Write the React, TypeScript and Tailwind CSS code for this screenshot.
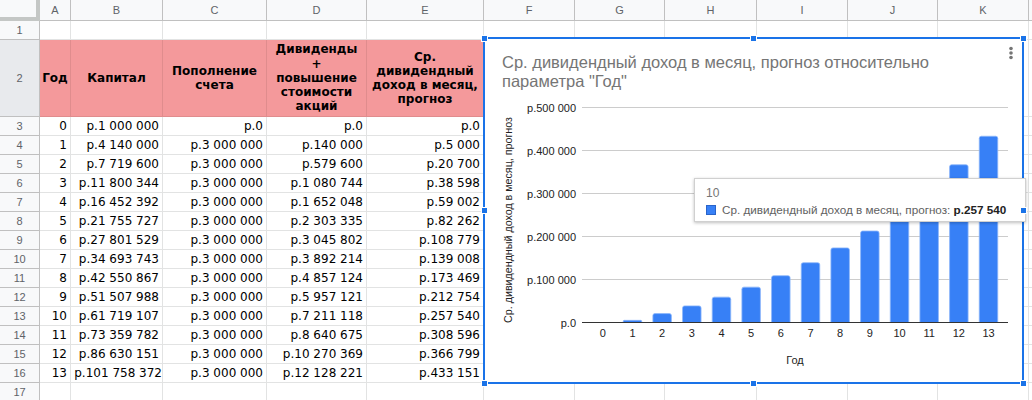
import React from "react";

const cols = ["A", "B", "C", "D", "E", "F", "G", "H", "I", "J", "K", ""];

const capital = [
  "1 000 000", "4 140 000", "7 719 600", "11 800 344", "16 452 392", "21 755 727", "27 801 529",
  "34 693 743", "42 550 867", "51 507 988", "61 719 107", "73 359 782", "86 630 151", "101 758 372",
];
const dividends = [
  "0", "140 000", "579 600", "1 080 744", "1 652 048", "2 303 335", "3 045 802",
  "3 892 214", "4 857 124", "5 957 121", "7 211 118", "8 640 675", "10 270 369", "12 128 221",
];
const monthly = [0, 5000, 20700, 38598, 59002, 82262, 108779, 139008, 173469, 212754, 257540, 308596, 366799, 433151];

const fmt = (n: number) => n.toString().replace(/\B(?=(\d{3})+(?!\d))/g, " ");

const headers: string[][] = [
  ["Год"],
  ["Капитал"],
  ["Пополнение", "счета"],
  ["Дивиденды", "+", "повышение", "стоимости", "акций"],
  ["Ср.", "дивидендный", "доход в месяц,", "прогноз"],
];

const rowH = [19, 77, ...Array(15).fill(19)];

function RowHeader({ n, tall }: { n: number; tall?: boolean }) {
  return (
    <div
      className={
        "flex items-center justify-center border-r border-b border-[#c0c0c0] text-[11px] text-[#5f6368] font-['Liberation_Sans',Arial,sans-serif] " +
        (tall ? "bg-[#e8eaed]" : "bg-[#f8f9fa]")
      }
    >
      {n}
    </div>
  );
}

function Cell({ children, tight }: { children?: React.ReactNode; tight?: boolean }) {
  return (
    <div
      className={
        "flex items-center justify-end whitespace-nowrap text-[12px] text-black border-r border-b border-[#e2e3e3] " +
        (tight ? "pr-0" : "pr-[3px]")
      }
    >
      {children}
    </div>
  );
}

function Chart() {
  const y0 = 322.5;
  const step = 43;
  const bx = (i: number) => 602.8 + 29.67 * i;
  const bw = 18.5;
  return (
    <div className="absolute left-[483px] top-[37px] w-[541px] h-[347px] border-2 border-[#1a73e8] bg-white">
      <svg
        className="absolute -left-[2px] -top-[2px]"
        width={541}
        height={347}
        viewBox="483 37 541 347"
        fontFamily="'Liberation Sans', Arial, sans-serif"
      >
        <text x={502} y={68} fontSize={16.5} fill="#757575">
          Ср. дивидендный доход в месяц, прогноз относительно
        </text>
        <text x={502} y={87} fontSize={16.5} fill="#757575">
          параметра "Год"
        </text>
        <circle cx={1011} cy={48.5} r={1.8} fill="#757575" />
        <circle cx={1011} cy={53} r={1.8} fill="#757575" />
        <circle cx={1011} cy={57.5} r={1.8} fill="#757575" />

        {[1, 2, 3, 4, 5].map((k) => (
          <line key={k} x1={582} x2={1008} y1={y0 - step * k} y2={y0 - step * k} stroke="#cccccc" />
        ))}
        {[0, 1, 2, 3, 4, 5].map((k) => (
          <text key={k} x={576} y={y0 - step * k + 4} fontSize={11} fill="#222" textAnchor="end">
            {k === 0 ? "р.0" : `р.${k}00 000`}
          </text>
        ))}
        {monthly.map((v, i) => {
          const h = (v / 100000) * step;
          if (h < 0.5) return null;
          const x = bx(i) - bw / 2;
          const t = y0 - h;
          const r = Math.min(2, h / 2);
          return (
            <path
              key={i}
              d={`M${x} ${y0} V${t + r} Q${x} ${t} ${x + r} ${t} H${x + bw - r} Q${x + bw} ${t} ${x + bw} ${t + r} V${y0} Z`}
              fill="#3780f6"
              stroke="#8db6fa"
              strokeWidth={0.8}
            />
          );
        })}
        <line x1={582} x2={1008} y1={y0} y2={y0} stroke="#333" />
        {monthly.map((_, i) => (
          <text key={i} x={bx(i)} y={337} fontSize={11} fill="#222" textAnchor="middle">
            {i}
          </text>
        ))}
        <text x={795} y={364} fontSize={11} fill="#222" textAnchor="middle">
          Год
        </text>
        <text
          x={0}
          y={0}
          fontSize={10.7}
          fill="#222"
          textAnchor="middle"
          transform="translate(512 220) rotate(-90)"
        >
          Ср. дивидендный доход в месяц, прогноз
        </text>
      </svg>

      <div className="absolute left-[209px] top-[139px] w-[332px] h-[44px] bg-white border border-[#d0d0d0] shadow-[0_1px_3px_rgba(0,0,0,0.25)] font-['Liberation_Sans',Arial,sans-serif] text-[11.7px] pl-[11px] pt-[6px]">
        <div className="text-[#757575] leading-[16px] text-[12px]">10</div>
        <div className="flex items-center gap-[6px] leading-[16px] mt-[1px]">
          <span className="inline-block w-[10px] h-[10px] bg-[#3780f6] border border-[#2a64c9]" />
          <span className="whitespace-nowrap text-[#616161]">
            Ср. дивидендный доход в месяц, прогноз: <b className="text-[#222]">р.257 540</b>
          </span>
        </div>
      </div>
    </div>
  );
}

function Handles() {
  const pts = [
    [484, 38], [753.5, 38], [1023, 38],
    [484, 210.5], [1023, 210.5],
    [484, 383], [753.5, 383], [1023, 383],
  ];
  return (
    <>
      {pts.map(([x, y], i) => (
        <div
          key={i}
          className="absolute w-[7px] h-[7px] bg-[#1a73e8] border border-white"
          style={{ left: x - 3.5, top: y - 3.5 }}
        />
      ))}
    </>
  );
}

export default function App() {
  return (
    <div className="relative w-[1032px] h-[400px] overflow-hidden bg-white font-['DejaVu_Sans',Verdana,sans-serif]">
      <div
        className="grid grid-cols-[40px_31px_92px_104px_100px_117px_91px_90px_92px_91px_90px_91px_60px]"
        style={{ gridTemplateRows: `21px ${rowH.map((h) => h + "px").join(" ")}` }}
      >
        {/* corner + column letters */}
        <div className="bg-[#f8f9fa] border-r-4 border-b-4 border-[#c4c7c5]" />
        {cols.map((c, i) => (
          <div
            key={i}
            className="flex items-center justify-center bg-[#f8f9fa] border-r border-b border-[#c0c0c0] text-[11px] text-[#5f6368] font-['Liberation_Sans',Arial,sans-serif]"
          >
            {c}
          </div>
        ))}

        {/* row 1 */}
        <RowHeader n={1} />
        {cols.map((_, i) => (
          <Cell key={i} />
        ))}

        {/* row 2 - header */}
        <RowHeader n={2} tall />
        {headers.map((lines, i) => (
          <div
            key={i}
            className="flex items-center justify-center text-center bg-[#f4999b] border-r border-b border-[#e08c8d] px-[2px] text-[12px] leading-[14.2px] font-bold text-black"
          >
            <div>
              {lines.map((l, j) => (
                <div key={j} className="whitespace-nowrap">
                  {l}
                </div>
              ))}
            </div>
          </div>
        ))}
        {cols.slice(5).map((_, i) => (
          <Cell key={i} />
        ))}

        {/* data */}
        {monthly.map((m, r) => (
          <React.Fragment key={r}>
            <RowHeader n={r + 3} />
            <Cell>{r}</Cell>
            <Cell tight={r === 13}>р.{capital[r]}</Cell>
            <Cell>{r === 0 ? "р.0" : "р.3 000 000"}</Cell>
            <Cell>р.{dividends[r]}</Cell>
            <Cell>р.{fmt(m)}</Cell>
            {cols.slice(5).map((_, i) => (
              <Cell key={i} />
            ))}
          </React.Fragment>
        ))}

        {/* row 17 */}
        <RowHeader n={17} />
        {cols.map((_, i) => (
          <Cell key={i} />
        ))}
      </div>

      <Chart />
      <Handles />
    </div>
  );
}
